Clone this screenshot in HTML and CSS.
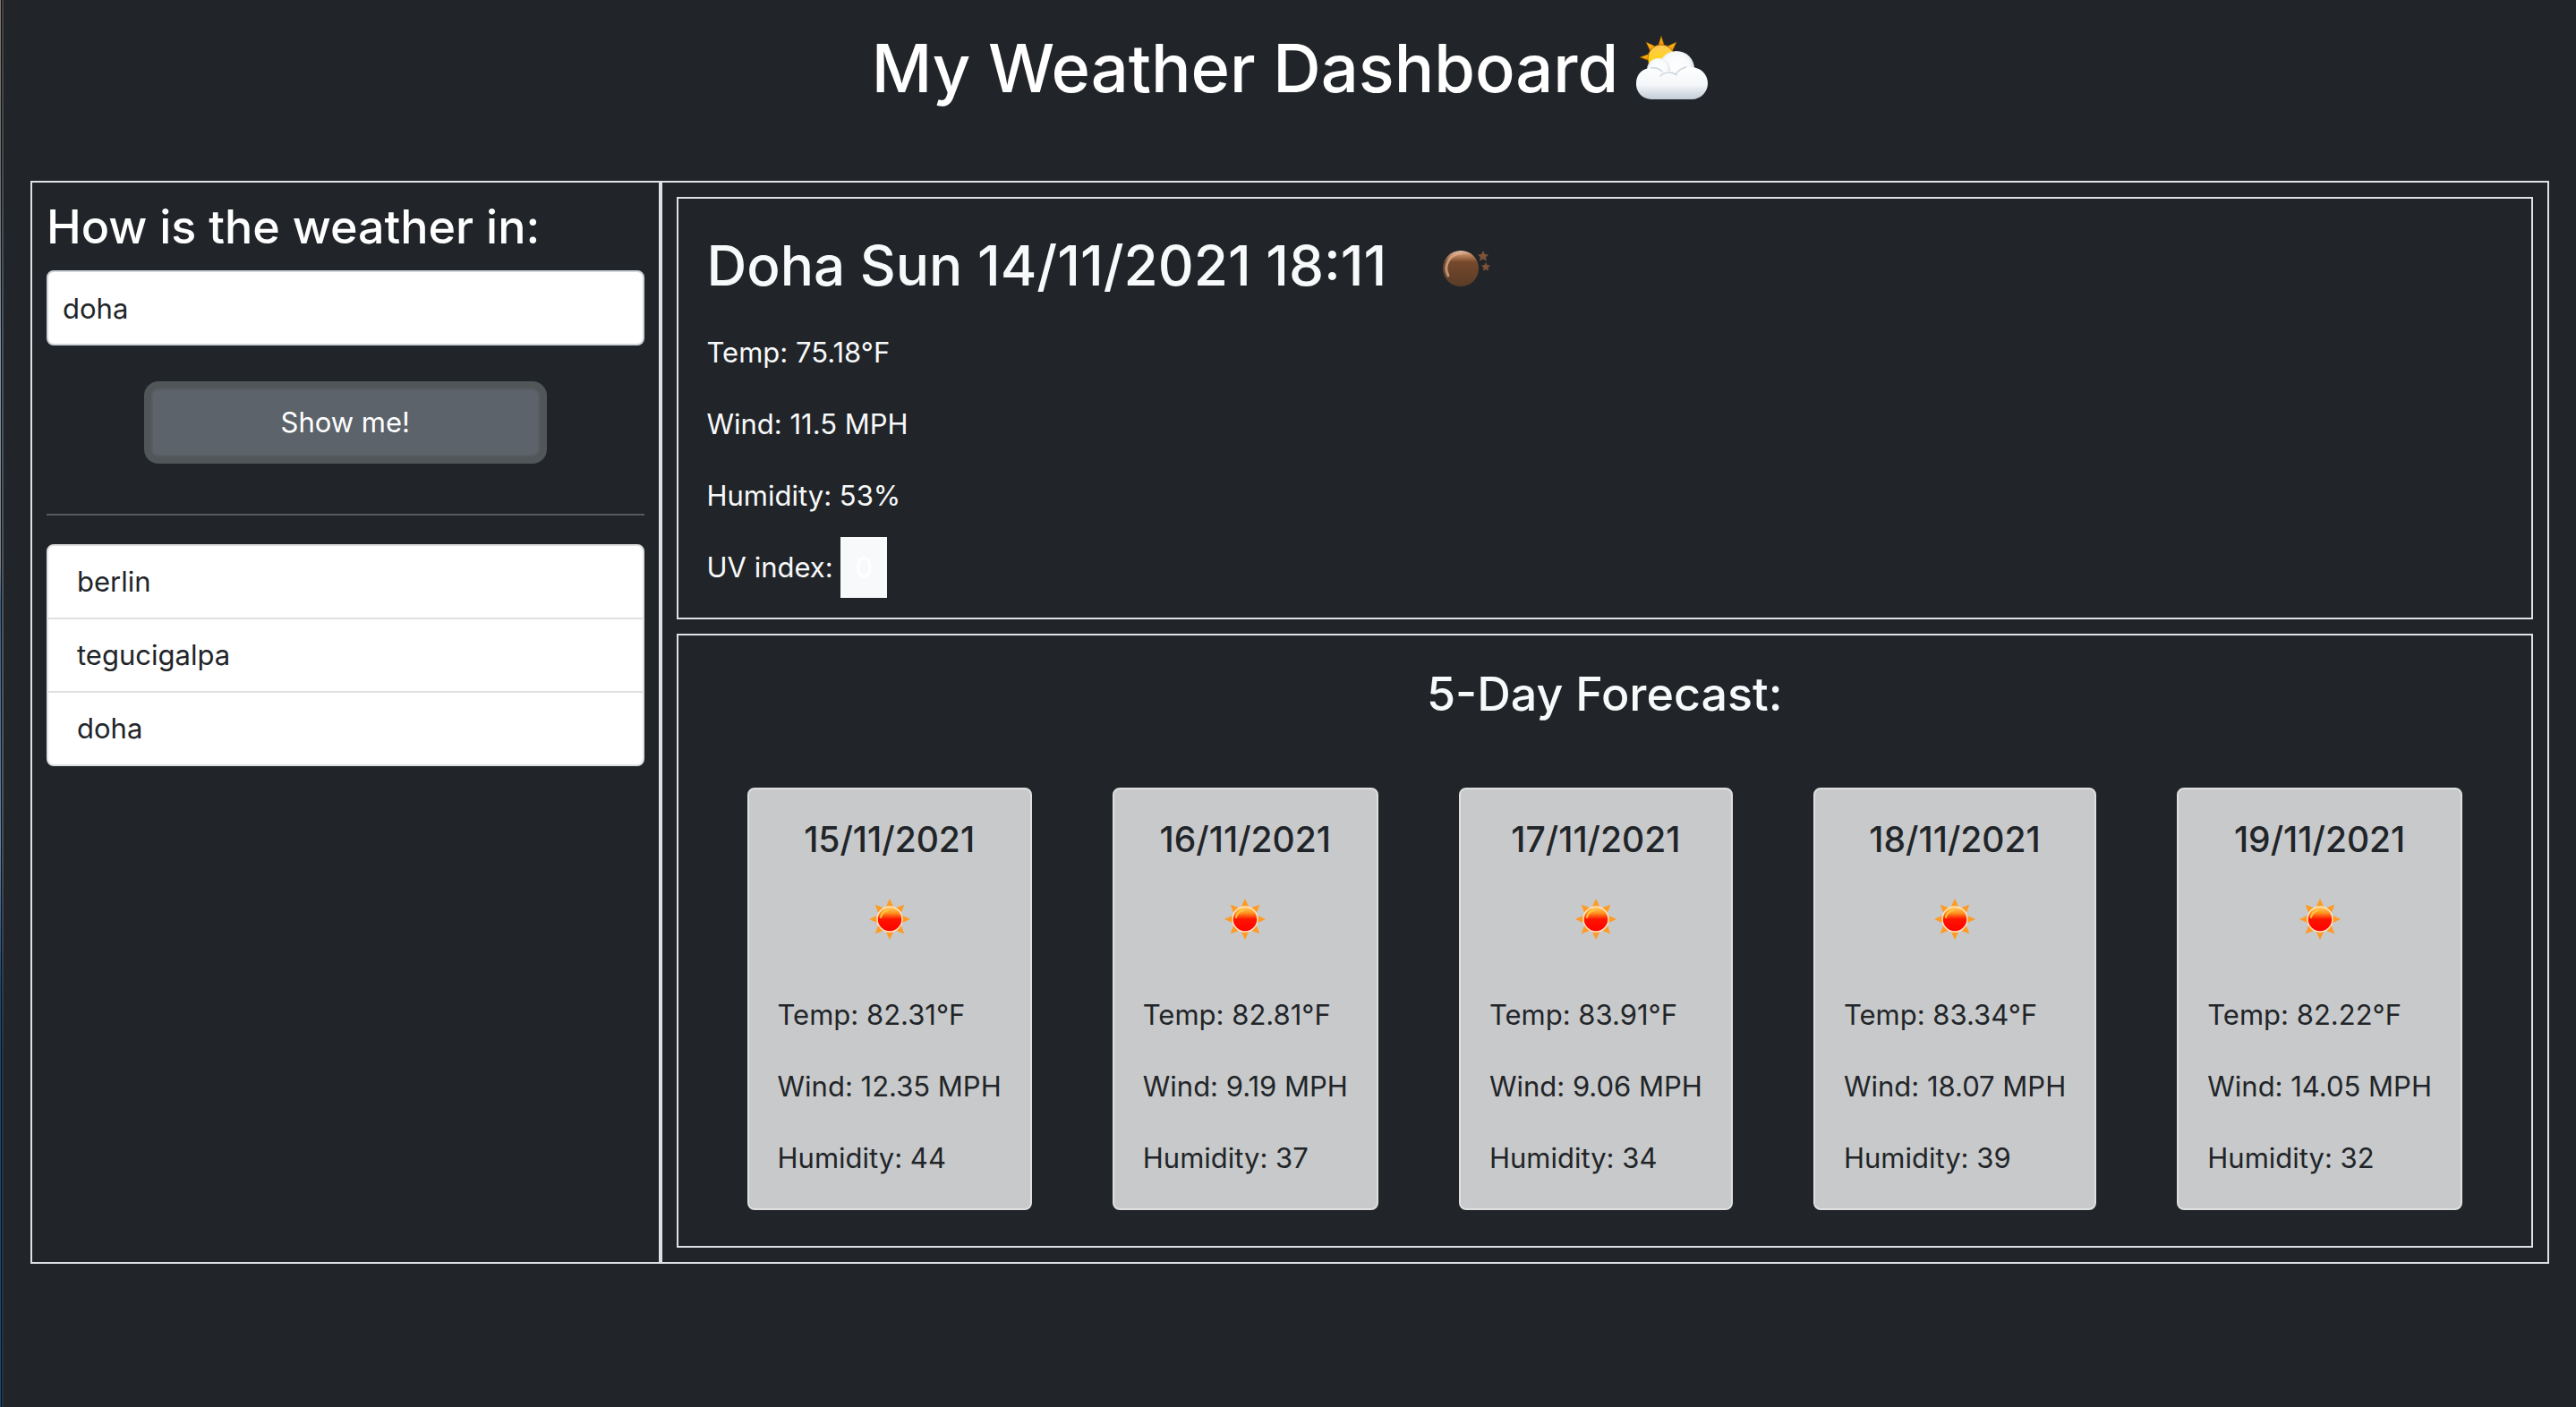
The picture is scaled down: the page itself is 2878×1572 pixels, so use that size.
FILE: index.html
```html
<!DOCTYPE html>
<html lang="en">
<head>
<meta charset="utf-8">
<meta name="viewport" content="width=device-width, initial-scale=1">
<title>My Weather Dashboard</title>
<link rel="stylesheet" href="styles.css">
</head>
<body>
<svg class="defs" width="0" height="0" aria-hidden="true">
  <defs>
    <linearGradient id="sun-core" x1="0" y1="0" x2="0" y2="1">
      <stop offset="0" stop-color="#ffd56a"/>
      <stop offset=".25" stop-color="#ff9420"/>
      <stop offset=".5" stop-color="#ff1500"/>
      <stop offset="1" stop-color="#ff0000"/>
    </linearGradient>
    <symbol id="icon-sun" viewBox="0 0 100 100">
      <g fill="#ff9a22">
        <path id="ray" d="M50 26l5 11h-10z"/>
        <use href="#ray" transform="rotate(45 50 49)"/>
        <use href="#ray" transform="rotate(90 50 49)"/>
        <use href="#ray" transform="rotate(135 50 49)"/>
        <use href="#ray" transform="rotate(180 50 49)"/>
        <use href="#ray" transform="rotate(225 50 49)"/>
        <use href="#ray" transform="rotate(270 50 49)"/>
        <use href="#ray" transform="rotate(315 50 49)"/>
      </g>
      <circle cx="50" cy="49" r="14" fill="url(#sun-core)" stroke="#ffe3c4" stroke-width="1.500"/>
      <path d="M40 47a10.500 10.500 0 0 1 8-8" fill="none" stroke="#ffc640" stroke-width="2" stroke-linecap="round"/>
    </symbol>
  </defs>
</svg>

<header class="page-header">
  <h1 class="page-title">My Weather Dashboard</h1>
  <svg class="title-icon" viewBox="0 0 80 72" role="img" aria-label="Sun behind cloud">
    <defs>
      <linearGradient id="title-sun" x1="0" y1="0" x2="0" y2="1">
        <stop offset="0" stop-color="#ffc95a"/>
        <stop offset=".5" stop-color="#ffd21f"/>
        <stop offset="1" stop-color="#ffe600"/>
      </linearGradient>
      <linearGradient id="title-ray" x1="0" y1="0" x2="0" y2="1">
        <stop offset="0" stop-color="#ffc21a"/>
        <stop offset="1" stop-color="#f08a00"/>
      </linearGradient>
      <radialGradient id="puff" cx=".5" cy=".42" r=".6">
        <stop offset="0" stop-color="#ffffff"/>
        <stop offset=".6" stop-color="#f7f9fb"/>
        <stop offset="1" stop-color="#ccd5df"/>
      </radialGradient>
      <linearGradient id="cloud-base" x1="0" y1="0" x2="0" y2="1">
        <stop offset="0" stop-color="#ffffff"/>
        <stop offset=".55" stop-color="#f4f6f9"/>
        <stop offset="1" stop-color="#c3ccd6"/>
      </linearGradient>
    </defs>
    <g fill="url(#title-ray)" stroke="#7a4300" stroke-width=".6">
      <path d="M28 0l3.500 11h-7z"/>
      <path d="M11 7l11 5-6 6z"/>
      <path d="M45 7l-11 5 6 6z"/>
      <path d="M4 24l11-4v8z"/>
    </g>
    <circle cx="28" cy="25" r="15" fill="url(#title-sun)" stroke="#a65a00" stroke-width=".8"/>
    <circle cx="45" cy="37" r="20" fill="url(#puff)"/>
    <circle cx="25" cy="38" r="13" fill="url(#puff)"/>
    <path d="M17 71a17 17 0 0 1-17-18c0-10 7-17 17-17 5 0 9 1 12 5 3-2 13-2 16 0 4-4 9-6 16-6 11 0 19 8 19 18s-8 18-18 18z" fill="url(#cloud-base)"/>
    <path d="M27 45c3-4 13-6 18-1M44 43c3-4 7-7 12-8M17 36c5-1 9 1 12 4" fill="none" stroke="#ccd4de" stroke-width="1.500" stroke-linecap="round"/>
  </svg>
</header>

<main class="dashboard">
  <aside class="sidebar">
    <form class="search" onsubmit="return false">
      <label class="search-label" for="city">How is the weather in:</label>
      <input class="search-input" id="city" type="text" value="doha" autocomplete="off">
      <button class="search-button" type="submit">Show me!</button>
    </form>
    <hr class="divider">
    <ul class="history">
      <li class="history-item">berlin</li>
      <li class="history-item">tegucigalpa</li>
      <li class="history-item">doha</li>
    </ul>
  </aside>

  <div class="content">
    <section class="panel current">
      <div class="current-heading">
        <h2 class="current-title">Doha Sun 14/11/2021 18:11</h2>
        <svg class="weather-icon" viewBox="0 0 100 100" role="img" aria-label="Clear night">
          <defs>
            <linearGradient id="moon" x1="0" y1="0" x2="0" y2="1">
              <stop offset="0" stop-color="#e8c4ac"/>
              <stop offset=".14" stop-color="#b98059"/>
              <stop offset=".32" stop-color="#75482c"/>
              <stop offset="1" stop-color="#593c27"/>
            </linearGradient>
          </defs>
          <circle cx="43" cy="50" r="20" fill="url(#moon)"/>
          <path d="M29 58a17 17 0 0 1 15-25" fill="none" stroke="#d9ad90" stroke-width="3" stroke-linecap="round" opacity=".75"/>
          <path d="M68 30l2 4 4 .500-3 3 1 4-4-2-4 2 1-4-3-3 4-.500zM71 43l1.500 3 3.500.500-2.500 2.500.500 3.500-3-1.500-3 1.500.500-3.500-2.500-2.500 3.500-.500z" fill="#7c5238"/>
        </svg>
      </div>
      <p class="reading">Temp: 75.18°F</p>
      <p class="reading">Wind: 11.5 MPH</p>
      <p class="reading">Humidity: 53%</p>
      <p class="reading">UV index: <span class="uv-badge">0</span></p>
    </section>

    <section class="panel forecast">
      <h3 class="forecast-title">5-Day Forecast:</h3>
      <div class="cards">
        <article class="card">
          <h4 class="card-date">15/11/2021</h4>
          <svg class="weather-icon" role="img" aria-label="Clear sky"><use href="#icon-sun"/></svg>
          <p class="reading">Temp: 82.31°F</p>
          <p class="reading">Wind: 12.35 MPH</p>
          <p class="reading">Humidity: 44</p>
        </article>
        <article class="card">
          <h4 class="card-date">16/11/2021</h4>
          <svg class="weather-icon" role="img" aria-label="Clear sky"><use href="#icon-sun"/></svg>
          <p class="reading">Temp: 82.81°F</p>
          <p class="reading">Wind: 9.19 MPH</p>
          <p class="reading">Humidity: 37</p>
        </article>
        <article class="card">
          <h4 class="card-date">17/11/2021</h4>
          <svg class="weather-icon" role="img" aria-label="Clear sky"><use href="#icon-sun"/></svg>
          <p class="reading">Temp: 83.91°F</p>
          <p class="reading">Wind: 9.06 MPH</p>
          <p class="reading">Humidity: 34</p>
        </article>
        <article class="card">
          <h4 class="card-date">18/11/2021</h4>
          <svg class="weather-icon" role="img" aria-label="Clear sky"><use href="#icon-sun"/></svg>
          <p class="reading">Temp: 83.34°F</p>
          <p class="reading">Wind: 18.07 MPH</p>
          <p class="reading">Humidity: 39</p>
        </article>
        <article class="card">
          <h4 class="card-date">19/11/2021</h4>
          <svg class="weather-icon" role="img" aria-label="Clear sky"><use href="#icon-sun"/></svg>
          <p class="reading">Temp: 82.22°F</p>
          <p class="reading">Wind: 14.05 MPH</p>
          <p class="reading">Humidity: 32</p>
        </article>
      </div>
    </section>
  </div>
</main>
</body>
</html>
```
FILE: styles.css
```css
*,
*::before,
*::after {
  box-sizing: border-box;
}

h1, h2, h3, h4, p, ul {
  margin: 0;
  padding: 0;
  font-weight: inherit;
}

body {
  margin: 0;
  min-height: 100vh;
  padding: 0 30px 0 34px;
  color: #f8f9fa;
  font-family: Inter, "Liberation Sans", sans-serif;
  font-size: 31px;
  line-height: 48px;
  /* window edge: backdrop, hairline, highlight */
  background:
    linear-gradient(#8a7060, #6b6a6c 12%, #7a8fa8 25%, #75808c 40%, #2f5f96 43%, #5a83b3 60%, #0f4a86 70%, #0c4b80 90%, #0a4e7d) 0 0 / 1px 100% no-repeat,
    linear-gradient(#0f1216, #0f1216) 1px 0 / 1px 100% no-repeat,
    linear-gradient(#3c4143, #4a4f52 20%, #505456 55%, #2c3238 75%, #2a3036) 2px 0 / 2px 100% no-repeat,
    #212529;
}

.defs {
  position: absolute;
}

.page-header {
  display: flex;
  justify-content: center;
  align-items: center;
  gap: 20px;
  padding: 28px 0 78px;
}

.page-title {
  color: #fff;
  font-size: 74px;
  font-weight: 500;
  line-height: 96px;
}

.title-icon {
  width: 80px;
  height: 72px;
}

.dashboard {
  display: grid;
  grid-template-columns: 1fr 3fr;
}

.sidebar,
.content,
.panel {
  border: 2px solid #dee2e6;
}

.sidebar,
.content {
  min-width: 0;
  padding: 16px;
}

.search {
  display: flex;
  flex-direction: column;
}

.search-label {
  margin-bottom: 14px;
  color: #fff;
  font-size: 52px;
  font-weight: 500;
  line-height: 68px;
}

.search-input {
  width: 100%;
  height: 84px;
  padding: 12px 16px;
  border: 2px solid #ced4da;
  border-radius: 8px;
  background: #fff;
  color: #212529;
  font: inherit;
}

.search-button {
  align-self: center;
  width: 65%;
  height: 76px;
  margin-top: 48px;
  padding: 12px 24px;
  border: 2px solid #565e64;
  border-radius: 8px;
  background: #5c636a;
  box-shadow: 0 0 0 8px #515659;
  color: #fff;
  font: inherit;
}

.divider {
  margin: 64px 0 32px;
  height: 2px;
  border: 0;
  background: #57595d;
}

.history {
  overflow: hidden;
  border: 2px solid #dfdfdf;
  border-radius: 8px;
  background: #fff;
  color: #212529;
  list-style: none;
}

.history-item {
  padding: 16px 32px;
}

.history-item + .history-item {
  border-top: 2px solid #dfdfdf;
}

.content {
  display: flex;
  flex-direction: column;
  gap: 16px;
}

.panel {
  padding: 32px;
}

.current {
  padding-top: 28px;
}

.current-heading {
  display: flex;
  align-items: flex-start;
  gap: 40px;
  margin-bottom: 20px;
}

.current-title {
  font-size: 62px;
  font-weight: 500;
  line-height: 94px;
}

.weather-icon {
  display: block;
  width: 100px;
  height: 100px;
}

.reading + .reading {
  margin-top: 32px;
}

.uv-badge {
  display: inline-block;
  margin: -10px 0;
  padding: 10px 16px;
  background: #f8f9fa;
  color: #fff;
}

.forecast-title {
  margin-bottom: 70px;
  font-size: 52px;
  font-weight: 500;
  line-height: 68px;
  text-align: center;
}

.cards {
  display: flex;
  justify-content: space-around;
  padding-bottom: 8px;
}

.card {
  padding: 32px;
  border: 2px solid #dfdfdf;
  border-radius: 8px;
  background: #c8c9ca;
  color: #212529;
}

.card-date {
  font-size: 39px;
  font-weight: 500;
  text-align: center;
}

.card .weather-icon {
  margin: 16px auto 32px;
}
```
